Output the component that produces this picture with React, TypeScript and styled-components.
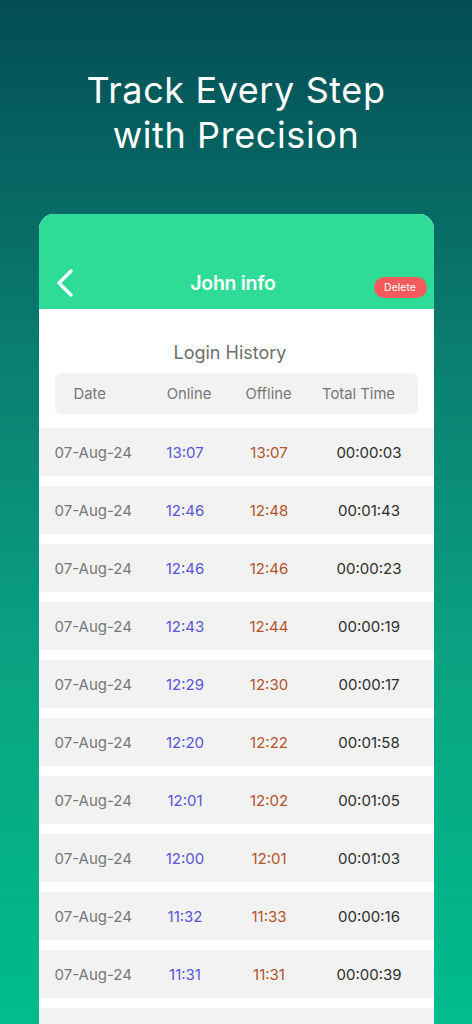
import React from 'react'
import styled, { createGlobalStyle } from 'styled-components'

const GlobalStyle = createGlobalStyle`
  html, body {
    margin: 0;
    padding: 0;
  }
  body {
    font-family: Inter, "Noto Sans", sans-serif;
    background: #00bb8c;
  }
`

const Screen = styled.div`
  width: 472px;
  height: 1024px;
  overflow: hidden;
  display: flex;
  flex-direction: column;
  align-items: center;
  background: linear-gradient(180deg, #034d55 0%, #0a7f70 35%, #0aa382 65%, #00bc8c 100%);
`

const Headline = styled.h1`
  margin: 68px 0 0;
  font-size: 36px;
  line-height: 45px;
  font-weight: 400;
  letter-spacing: 0.6px;
  color: #ffffff;
  text-align: center;
`

const Card = styled.div`
  margin-top: 56px;
  width: 395px;
  flex: 1;
  background: #ffffff;
  border-radius: 15px 15px 0 0;
  overflow: hidden;
`

const NavBar = styled.div`
  height: 95px;
  background: #2edc98;
  display: grid;
  grid-template-columns: 80px 1fr 80px;
  align-items: center;
  padding-top: 42px;
  box-sizing: border-box;
`

const BackButton = styled.button`
  border: none;
  background: none;
  padding: 0 0 0 17px;
  display: flex;
  align-items: center;
`

const NavTitle = styled.div`
  text-align: center;
  color: #ffffff;
  font-size: 19.5px;
  font-weight: 600;
  letter-spacing: -0.3px;
  margin: 0 6px -1px 0;
`

const DeletePill = styled.button`
  justify-self: end;
  margin-right: 7px;
  margin-top: 9px;
  width: 53px;
  height: 21px;
  border: none;
  border-radius: 11px;
  background: #f55b5d;
  color: #ffffff;
  font-family: Inter, sans-serif;
  font-size: 10.5px;
  padding: 0;
`

const SectionTitle = styled.div`
  text-align: center;
  color: #6e6e6e;
  font-size: 18px;
  margin-top: 33px;
  padding-right: 12px;
  line-height: 22px;
`

const HeaderRow = styled.div`
  margin: 9px 16px 0;
  height: 41px;
  background: #f2f2f2;
  border-radius: 6px;
  display: grid;
  grid-template-columns: 86px 97px 62px 1fr;
  align-items: center;
  color: #777777;
  font-size: 14.8px;
  line-height: 18px;
  padding-top: 1px;
  box-sizing: border-box;
`

const HeadCell = styled.span<{ $left?: boolean }>`
  padding-left: ${({ $left }) => ($left ? '19px' : '0')};
  padding-right: ${({ $left }) => ($left ? '0' : '0')};
  white-space: nowrap;
  display: flex;
  justify-content: ${({ $left }) => ($left ? 'flex-start' : 'center')};
`

const Rows = styled.div`
  margin-top: 14px;
  display: flex;
  flex-direction: column;
  gap: 10px;
`

const Row = styled.div`
  height: 48px;
  background: #f2f2f2;
  display: grid;
  grid-template-columns: 107px 79px 89px 1fr;
  align-items: center;
  font-size: 15px;
  padding-right: 9px;
`

const Cell = styled.span<{ $color: string; $left?: boolean }>`
  color: ${({ $color }) => $color};
  text-align: ${({ $left }) => ($left ? 'left' : 'center')};
  padding-left: ${({ $left }) => ($left ? '16px' : '0')};
  white-space: nowrap;
`

const rows = [
  ['13:07', '13:07', '00:00:03'],
  ['12:46', '12:48', '00:01:43'],
  ['12:46', '12:46', '00:00:23'],
  ['12:43', '12:44', '00:00:19'],
  ['12:29', '12:30', '00:00:17'],
  ['12:20', '12:22', '00:01:58'],
  ['12:01', '12:02', '00:01:05'],
  ['12:00', '12:01', '00:01:03'],
  ['11:32', '11:33', '00:00:16'],
  ['11:31', '11:31', '00:00:39'],
]

const App = () => {
  return (
    <Screen>
      <GlobalStyle />
      <Headline>
        Track Every Step
        <br />
        with Precision
      </Headline>
      <Card>
        <NavBar>
          <BackButton>
            <svg width="18" height="28" viewBox="0 0 18 28">
              <polyline
                points="15,2 3,14 15,26"
                fill="none"
                stroke="#ffffff"
                strokeWidth="3.2"
                strokeLinecap="round"
                strokeLinejoin="round"
              />
            </svg>
          </BackButton>
          <NavTitle>John info</NavTitle>
          <DeletePill>Delete</DeletePill>
        </NavBar>
        <SectionTitle>Login History</SectionTitle>
        <HeaderRow>
          <HeadCell $left>Date</HeadCell>
          <HeadCell>Online</HeadCell>
          <HeadCell>Offline</HeadCell>
          <HeadCell>Total Time</HeadCell>
        </HeaderRow>
        <Rows>
          {rows.map(([on, off, total], i) => (
            <Row key={i}>
              <Cell $color="#777777" $left>07-Aug-24</Cell>
              <Cell $color="#5a55d6">{on}</Cell>
              <Cell $color="#b4532c">{off}</Cell>
              <Cell $color="#2e2e2e">{total}</Cell>
            </Row>
          ))}
          <Row />
        </Rows>
      </Card>
    </Screen>
  )
}

export default App
